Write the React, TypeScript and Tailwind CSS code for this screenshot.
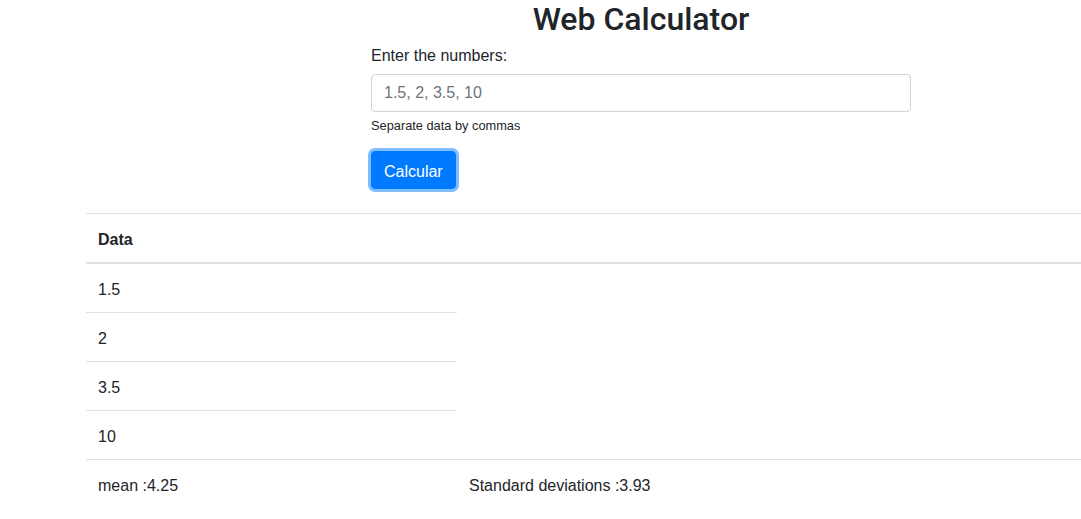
export default function App() {
  const data = [1.5, 2, 3.5, 10];

  return (
    <div
      className="w-[1081px] h-[519px] overflow-hidden bg-white text-[#212529]"
      style={{ fontFamily: '"Liberation Sans", Arial, sans-serif' }}
    >
      {/* Form */}
      <div className="w-[540px] ml-[371px] flex flex-col">
        <h1 className="h-[38px] -ml-[90px] w-[720px] text-center text-[32px] leading-[38px] font-medium mb-[6px]" style={{ fontFamily: '"Roboto", "Liberation Sans", sans-serif' }}>
          Web Calculator
        </h1>
        <label className="text-base leading-6 mb-[6px]">Enter the numbers:</label>
        <input
          type="text"
          placeholder="1.5, 2, 3.5, 10"
          className="h-[38px] w-full rounded border border-[#ced4da] px-3 text-base text-[#495057] placeholder:text-[#6c757d] outline-none"
        />
        <small className="mt-1 text-[12.8px] leading-[19px] text-[#212529]">
          Separate data by commas
        </small>
        <div className="mt-[16px]">
          <button className="h-[38px] px-3 pt-[3px] rounded border border-[#007bff] bg-[#007bff] text-white text-base ring-[3px] ring-[#80bdff]">
            Calcular
          </button>
        </div>
      </div>

      {/* Table */}
      <div className="ml-[86px] mt-[24px] w-[995px] border-t border-[#dee2e6]">
        <div className="h-[50px] px-3 pt-[3px] flex items-center font-bold text-base border-b-2 border-[#dee2e6]">
          Data
        </div>
        {data.map((d, i) => (
          <div
            key={d}
            className={
              i < data.length - 1
                ? "w-[371px] h-[49px] px-3 pt-[3px] flex items-center border-b border-[#dee2e6]"
                : "w-[371px] h-[48px] px-3 pt-[3px] flex items-center"
            }
          >
            {d}
          </div>
        ))}
        <div className="flex h-[49px] pt-[3px] items-center border-t border-[#dee2e6]">
          <div className="w-[371px] px-3">mean :4.25</div>
          <div className="px-3">Standard deviations :3.93</div>
        </div>
      </div>
    </div>
  );
}
